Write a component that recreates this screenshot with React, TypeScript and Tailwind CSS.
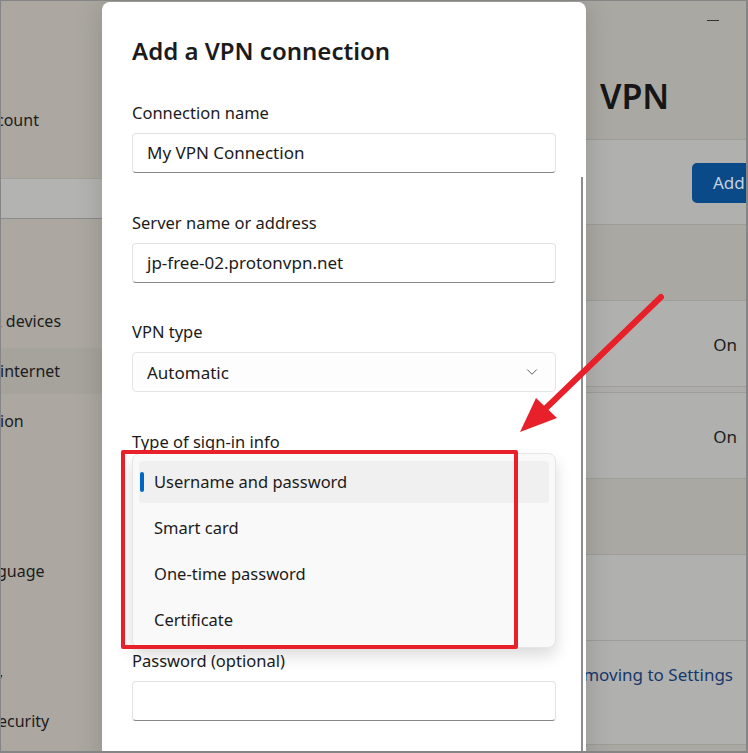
import { ChevronDown } from 'lucide-react';

const font = "font-['Noto_Sans',sans-serif]";

// background sidebar rows (only the cut-off right part is visible)
const navItems = [
  { text: '& devices', shift: '-ml-[11px]' },
  { text: 'internet', shift: '-ml-[1px]' },
  { text: 'ion', shift: '-ml-[1px]' },
  { text: '', shift: 'ml-0' },
  { text: '', shift: 'ml-0' },
  { text: 'guage', shift: '-ml-[4px]' },
  { text: '', shift: 'ml-0' },
  { text: ',', shift: '-ml-[2px]' },
  { text: 'ecurity', shift: '-ml-[3px]' },
];

const signInOptions = ['Username and password', 'Smart card', 'One-time password', 'Certificate'];

function TextBox({ value }: { value?: string }) {
  return (
    <div className="h-[40px] rounded-[4px] border border-[#e3e3e3] border-b-[#878787] bg-white px-[14px] flex items-center text-[17px] text-[#1b1b1b]">
      {value}
    </div>
  );
}

function Select({ value }: { value?: string }) {
  return (
    <div className="h-[40px] rounded-[4px] border border-[#e5e5e5] bg-[#fdfdfd] pl-[14px] pr-[14px] flex items-center justify-between text-[17px] text-[#1b1b1b]">
      <span>{value}</span>
      <ChevronDown size={18} strokeWidth={1.3} className="text-[#5c5c5c]" />
    </div>
  );
}

function Field({ label, children }: { label: string; children: React.ReactNode }) {
  return (
    <div className="flex flex-col">
      <div className="leading-[24px] text-[16.5px] text-[#1b1b1b]">{label}</div>
      <div className="mt-[8px]">{children}</div>
    </div>
  );
}

export default function App() {
  return (
    <div className={`relative w-[748px] h-[753px] overflow-hidden border-l border-t border-r-2 border-b-2 border-[#858585] bg-[#aba8a1] ${font}`}>
      <div className="flex h-full">
        {/* settings sidebar */}
        <div className="w-[101px] shrink-0 flex flex-col bg-[#aca8a1] text-[16px] text-[#1c1c1c] overflow-hidden">
          <div className="h-[107px]" />
          <div className="h-[24px] leading-[24px] whitespace-nowrap -ml-[5px]">count</div>
          <div className="h-[46px]" />
          <div className="h-[41px] bg-[#b3b3b2] border-t border-[#a3a19c] border-b border-b-[#8a8a8a]" />
          <div className="h-[79px]" />
          <div className="flex flex-col gap-[4px]">
            {navItems.map((item, i) => (
              <div
                key={i}
                className={`h-[46px] flex items-center whitespace-nowrap ${i === 1 ? 'bg-[#a6a39d]' : ''}`}
              >
                <span className={item.shift}>{item.text}</span>
              </div>
            ))}
          </div>
        </div>

        {/* settings main page */}
        <div className="flex-1 flex flex-col bg-[#aaa8a2] text-[17px] text-[#1c1c1c]">
          <div className="h-[138px] flex flex-col">
            <div className="h-[38px] flex justify-end items-center pr-[27px]">
              <div className="w-[12px] h-px bg-[#333]" />
            </div>
            <div className="pl-[498px] mt-[37px] text-[34px] leading-[40px] font-semibold text-[#161616]">VPN</div>
          </div>
          <div className="h-[86px] border-y border-[#9e9d98] bg-[#b0b0af] flex items-center justify-end pt-[2px]">
            <div className="w-[80px] h-[40px] -mr-[26px] rounded-[5px] bg-[#0b4a88] text-[#c5d1df] flex items-center pl-[21px]">
              Add
            </div>
          </div>
          <div className="h-[75px]" />
          <div className="h-[87px] border-y border-[#9e9d98] bg-[#b0b0af] flex items-center justify-end pr-[9px] pt-[2px]">On</div>
          <div className="h-[5px] bg-[#adacaa]" />
          <div className="h-[87px] border-y border-[#9e9d98] bg-[#b0b0af] flex items-center justify-end pr-[9px] pt-[2px]">On</div>
          <div className="h-[75px]" />
          <div className="h-[86px] border-t border-[#9e9d98] bg-[#b0b0af]" />
          <div className="h-[105px] border-y border-[#9e9d98] bg-[#b0b0af] flex justify-end pr-[13px] pt-[21px] text-[#17386a] whitespace-nowrap">
            Learn more about moving to Settings
          </div>
        </div>
      </div>

      {/* dialog */}
      <div className="absolute left-[101px] top-[1px] w-[484px] h-[800px] bg-white rounded-t-[8px] shadow-[0_0_28px_rgba(0,0,0,0.16)] px-[30px] pt-[31px]">
        <div className="text-[24px] leading-[36px] font-semibold text-[#1b1b1b]">Add a VPN connection</div>
        <div className="mt-[32px] flex flex-col gap-[37.7px]">
          <Field label="Connection name">
            <TextBox value="My VPN Connection" />
          </Field>
          <Field label="Server name or address">
            <TextBox value="jp-free-02.protonvpn.net" />
          </Field>
          <Field label="VPN type">
            <Select value="Automatic" />
          </Field>
          <Field label="Type of sign-in info">
            <Select />
          </Field>
          <Field label="User name (optional)">
            <TextBox />
          </Field>
          <Field label="Password (optional)">
            <TextBox />
          </Field>
        </div>

        {/* scrollbar */}
        <div className="absolute left-[479px] top-[175px] bottom-0 w-[2px] bg-[#8d8d8d]" />

        {/* open dropdown */}
        <div className="absolute left-[30px] top-[451px] w-[424px] h-[195px] rounded-[8px] border border-[#e6e6e6] bg-[#f9f9f9] shadow-[0_8px_16px_rgba(0,0,0,0.14)] px-[6px] pt-[7px] flex flex-col gap-[4px]">
          {signInOptions.map((opt, i) => (
            <div
              key={opt}
              className={`relative h-[42px] rounded-[4px] flex items-center pl-[15px] text-[16.5px] text-[#1b1b1b] ${i === 0 ? 'bg-[#f0f0f0]' : ''}`}
            >
              {i === 0 && <div className="absolute left-[1px] top-[11px] w-[4px] h-[20px] rounded-full bg-[#0067c0]" />}
              {opt}
            </div>
          ))}
        </div>
      </div>

      {/* annotation: highlight box */}
      <div className="absolute left-[120px] top-[449px] w-[397px] h-[199px] border-[4px] border-[#e8202a] rounded-[2px]" />

      {/* annotation: arrow */}
      <svg className="absolute inset-0 pointer-events-none" width="748" height="753" viewBox="0 0 748 753">
        <line x1="660" y1="296" x2="542" y2="410" stroke="#e8202a" strokeWidth="6" strokeLinecap="round" />
        <polygon points="519,431 535,397 556,417" fill="#e8202a" />
      </svg>
    </div>
  );
}
